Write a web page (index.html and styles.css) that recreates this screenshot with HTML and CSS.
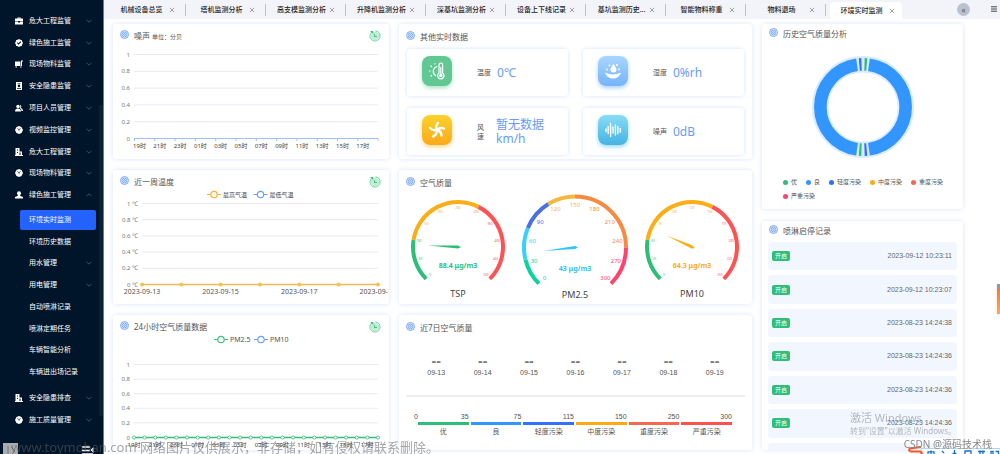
FILE: index.html
```html
<!DOCTYPE html>
<html lang="zh-CN">
<head>
<meta charset="utf-8">
<meta name="viewport" content="width=device-width, initial-scale=1">
<title>环境实时监测</title>
<link rel="stylesheet" href="styles.css">
</head>
<body>
<svg class="sprite" aria-hidden="true">
  <symbol id="i-case" viewBox="0 0 16 16"><path d="M5 3V1h6v2h5v5H0V3zm1.500-.5v.5h3v-.5zM0 9h6v2h4V9h6v6H0z"/></symbol>
  <symbol id="i-check" viewBox="0 0 16 16"><path fill-rule="evenodd" d="M8 0l2.500 1.500L13.500 2l.8 3L16 8l-1.700 3-.8 3-3 .5L8 16l-2.500-1.500-3-.5-.8-3L0 8l1.700-3 .8-3 3-.5zM4 8l3.300 3.500L12.500 6 11 4.600 7.200 8.500 5.500 6.600z"/></symbol>
  <symbol id="i-truck" viewBox="0 0 16 16"><path d="M0 3h11v9H0zM12 1h4v2h-2v9h-2zM1 13h3v2H1zm9 0h3v2h-3z"/></symbol>
  <symbol id="i-clip" viewBox="0 0 16 16"><path fill-rule="evenodd" d="M2 0h12v16H2zm3 3v1.500h6V3zm3 2.500a2.500 2.500 0 100 5 2.500 2.500 0 000-5zM4 12v1.500h8V12z"/></symbol>
  <symbol id="i-people" viewBox="0 0 16 16"><circle cx="6" cy="5" r="3.500"/><path d="M0 15c0-4 2-6 6-6s6 2 6 6zM10 1.500a3.500 3.500 0 011 6.500c3 .5 5 2.500 5 6h-3c0-3-1.500-5-3.500-6 1.500-2 1.500-4.500.5-6.500z"/></symbol>
  <symbol id="i-cube" viewBox="0 0 16 16"><path fill-rule="evenodd" d="M8 0l5 2 3 6-3 6-5 2-5-2-3-6 3-6zM4.500 5.500l3 1.900V10h1V7.400l3-1.900-.5-.8-3 1.800-3-1.800z"/></symbol>
  <symbol id="i-build" viewBox="0 0 16 16"><path fill-rule="evenodd" d="M1 0h8v7h5v7h2v2H0v-2h1zm3 3v2h2V3zm0 5v2h2V8zm5 1v5h2V9z"/></symbol>
  <symbol id="i-person" viewBox="0 0 16 16"><circle cx="8" cy="4.500" r="4"/><path d="M6 8h4l1 2 5 2v3H0v-3l5-2z"/></symbol>
  <symbol id="i-down" viewBox="0 0 10 10"><path d="M1 3l4 4 4-4" fill="none" stroke="currentColor"/></symbol>
  <symbol id="i-up" viewBox="0 0 10 10"><path d="M1 7l4-4 4 4" fill="none" stroke="currentColor"/></symbol>
  <symbol id="i-x" viewBox="0 0 10 10"><path d="M1.500 1.500l7 7m0-7l-7 7" fill="none" stroke="currentColor" stroke-width="1.300"/></symbol>
  <symbol id="i-target" viewBox="0 0 18 18"><g fill="none" stroke="#6a9cf5" stroke-width="1.600"><circle cx="9" cy="9" r="8" fill="#e4eefe"/><circle cx="9" cy="9" r="4.800"/><circle cx="9" cy="9" r="1.800"/></g></symbol>
  <symbol id="i-reload" viewBox="0 0 24 24"><circle cx="12" cy="12" r="8.500" fill="#c0eed5"/><path d="M6 4A10 10 0 1022 12 10 10 0 0013 2" fill="none" stroke="#5acb92" stroke-width="1.800"/><path d="M2 2h6.500v6z" fill="#43c181"/><path d="M11 8.500V13h5" fill="none" stroke="#4cc488" stroke-width="2.200"/></symbol>
</svg>

<div class="app">
  <aside class="side">
    <ul class="menu menu-main">
      <li><a href="#"><svg class="ico"><use href="#i-case"/></svg><span>危大工程监管</span><svg class="arr"><use href="#i-down"/></svg></a></li>
      <li><a href="#"><svg class="ico"><use href="#i-check"/></svg><span>绿色施工监管</span><svg class="arr"><use href="#i-down"/></svg></a></li>
      <li><a href="#"><svg class="ico"><use href="#i-truck"/></svg><span>现场物料监管</span><svg class="arr"><use href="#i-down"/></svg></a></li>
      <li><a href="#"><svg class="ico"><use href="#i-clip"/></svg><span>安全隐患监管</span><svg class="arr"><use href="#i-down"/></svg></a></li>
      <li><a href="#"><svg class="ico"><use href="#i-people"/></svg><span>项目人员管理</span><svg class="arr"><use href="#i-down"/></svg></a></li>
      <li><a href="#"><svg class="ico"><use href="#i-cube"/></svg><span>视频监控管理</span><svg class="arr"><use href="#i-down"/></svg></a></li>
      <li><a href="#"><svg class="ico"><use href="#i-build"/></svg><span>危大工程管理</span><svg class="arr"><use href="#i-down"/></svg></a></li>
      <li><a href="#"><svg class="ico"><use href="#i-cube"/></svg><span>现场物料管理</span><svg class="arr"><use href="#i-down"/></svg></a></li>
      <li><a href="#"><svg class="ico"><use href="#i-person"/></svg><span>绿色施工管理</span><svg class="arr"><use href="#i-up"/></svg></a></li>
    </ul>
    <ul class="menu menu-sub">
      <li><a href="#" class="active"><span>环境实时监测</span></a></li>
      <li><a href="#"><span>环境历史数据</span></a></li>
      <li><a href="#"><span>用水管理</span><svg class="arr"><use href="#i-down"/></svg></a></li>
      <li><a href="#"><span>用电管理</span><svg class="arr"><use href="#i-down"/></svg></a></li>
      <li><a href="#"><span>自动喷淋记录</span></a></li>
      <li><a href="#"><span>喷淋定期任务</span></a></li>
      <li><a href="#"><span>车辆智能分析</span></a></li>
      <li><a href="#"><span>车辆进出场记录</span></a></li>
    </ul>
    <ul class="menu menu-tail">
      <li><a href="#"><svg class="ico"><use href="#i-build"/></svg><span>安全隐患排查</span><svg class="arr"><use href="#i-down"/></svg></a></li>
      <li><a href="#"><svg class="ico"><use href="#i-cube"/></svg><span>施工质量管理</span><svg class="arr"><use href="#i-down"/></svg></a></li>
    </ul>
    <div class="side-foot">
      <button class="dock" aria-label="展开"><svg viewBox="0 0 15 15"><path d="M5 3v10M8 4l4 4-4 4" fill="none" stroke="#777"/></svg></button>
      <button class="fold" aria-label="收起菜单"><svg viewBox="0 0 12 9"><path d="M0 1h8M0 4.500h8M0 8h11" stroke="#fff" stroke-width="1.300"/><path d="M11.500 1v6L8.500 4z" fill="#fff"/></svg></button>
    </div>
    <i class="side-bar"></i>
  </aside>

  <div class="page">
    <nav class="tabs">
      <div class="tab"><a href="#">机械设备总览</a><button aria-label="关闭"><svg><use href="#i-x"/></svg></button></div>
      <div class="tab"><a href="#">塔机监测分析</a><button aria-label="关闭"><svg><use href="#i-x"/></svg></button></div>
      <div class="tab"><a href="#">高支模监测分析</a><button aria-label="关闭"><svg><use href="#i-x"/></svg></button></div>
      <div class="tab"><a href="#">升降机监测分析</a><button aria-label="关闭"><svg><use href="#i-x"/></svg></button></div>
      <div class="tab"><a href="#">深基坑监测分析</a><button aria-label="关闭"><svg><use href="#i-x"/></svg></button></div>
      <div class="tab"><a href="#">设备上下线记录</a><button aria-label="关闭"><svg><use href="#i-x"/></svg></button></div>
      <div class="tab"><a href="#">基坑监测历史...</a><button aria-label="关闭"><svg><use href="#i-x"/></svg></button></div>
      <div class="tab"><a href="#">智能物料称重</a><button aria-label="关闭"><svg><use href="#i-x"/></svg></button></div>
      <div class="tab"><a href="#">物料退场</a><button aria-label="关闭"><svg><use href="#i-x"/></svg></button></div>
      <div class="tab current"><a href="#">环境实时监测</a><button aria-label="关闭"><svg><use href="#i-x"/></svg></button></div>
      <button class="more" aria-label="更多标签">«</button>
      <button class="burger" aria-label="菜单"><svg viewBox="0 0 6 6"><path d="M0 .8h6M0 3h6M0 5.200h6" stroke="#444"/></svg></button>
    </nav>

    <main class="board">
      <div class="col">
        <section class="card">
          <header><svg class="target"><use href="#i-target"/></svg><h2>噪声 <small>单位：分贝</small></h2><button class="reload" aria-label="刷新"><svg><use href="#i-reload"/></svg></button></header>
          <svg class="chart" id="noise" viewBox="0 0 276 117"></svg>
        </section>
        <section class="card">
          <header><svg class="target"><use href="#i-target"/></svg><h2>近一周温度</h2><button class="reload" aria-label="刷新"><svg><use href="#i-reload"/></svg></button></header>
          <svg class="chart" id="temp" viewBox="0 0 276 116"></svg>
        </section>
        <section class="card">
          <header><svg class="target"><use href="#i-target"/></svg><h2>24小时空气质量数据</h2><button class="reload" aria-label="刷新"><svg><use href="#i-reload"/></svg></button></header>
          <svg class="chart" id="air24" viewBox="0 0 276 117"></svg>
        </section>
      </div>

      <div class="col mid">
        <section class="card">
          <header><svg class="target"><use href="#i-target"/></svg><h2>其他实时数据</h2></header>
          <div class="tiles">
            <div class="tile">
              <svg class="badge green" viewBox="0 0 30 30"><g fill="none" stroke="#fff" stroke-width="1.200" stroke-linecap="round"><path d="M15 10.500a5 5 0 00-1.500 9"/><path d="M8 15H7.500M9.500 10.500l-.6-.6M9.500 19.500l-.6.600M13 8V7.500"/><path d="M17 17V9a1.800 1.800 0 013.600 0v8a3.200 3.200 0 11-3.600 0z"/></g><path d="M18.200 11h1.200v7h-1.200z" fill="#fff"/><circle cx="18.800" cy="19.500" r="1.700" fill="#fff"/></svg>
              <span class="name">温度</span><b>0℃</b>
            </div>
            <div class="tile">
              <svg class="badge blue" viewBox="0 0 30 30"><g fill="#fff"><path d="M7 16.500q8 4 16 0-2 6-8 6t-8-6zM15.500 8q-3 4-3 5.500a3 3 0 006 0q0-1.500-3-5.500z"/><circle cx="11.500" cy="9.500" r="1"/><circle cx="19" cy="9" r="1"/><circle cx="9" cy="13.500" r=".9"/><circle cx="21" cy="13.500" r=".9"/></g></svg>
              <span class="name">湿度</span><b>0%rh</b>
            </div>
            <div class="tile">
              <svg class="badge yellow" viewBox="0 0 30 30"><g fill="none" stroke="#fff" stroke-width="2.400" stroke-linecap="round"><path d="M15 15q-2-4 1-7M15 15q3-3 7-1.500M15 15q4.500 1.500 4.500 5.500M15 15q0 4.500-4 6.500M15 15q-4 1-7-2"/></g></svg>
              <span class="name wrap">风速</span><b>暂无数据km/h</b>
            </div>
            <div class="tile">
              <svg class="badge cyan" viewBox="0 0 30 30"><path d="M8 14v2.500M10.200 11.500v7M12.600 8.500v13M15 12v6M17.400 10v10M19.800 11.500v7M22.200 13.500v3.500" stroke="#fff" stroke-width="1.400" stroke-linecap="round"/></svg>
              <span class="name">噪声</span><b>0dB</b>
            </div>
          </div>
        </section>
        <section class="card">
          <header><svg class="target"><use href="#i-target"/></svg><h2>空气质量</h2></header>
          <svg class="chart" id="gauges" viewBox="0 0 353 110"></svg>
        </section>
        <section class="card">
          <header><svg class="target"><use href="#i-target"/></svg><h2>近7日空气质量</h2></header>
          <ul class="days">
            <li><b>--</b>09-13</li><li><b>--</b>09-14</li><li><b>--</b>09-15</li><li><b>--</b>09-16</li><li><b>--</b>09-17</li><li><b>--</b>09-18</li><li><b>--</b>09-19</li>
          </ul>
          <ul class="scale">
            <li class="l1"><span><i>0</i><i>35</i></span>优</li>
            <li class="l2"><span><i>75</i></span>良</li>
            <li class="l3"><span><i>115</i></span>轻度污染</li>
            <li class="l4"><span><i>150</i></span>中度污染</li>
            <li class="l5"><span><i>250</i></span>重度污染</li>
            <li class="l6"><span><i>300</i></span>严重污染</li>
          </ul>
        </section>
      </div>

      <div class="col right">
        <section class="card history">
          <header><svg class="target"><use href="#i-target"/></svg><h2>历史空气质量分析</h2></header>
          <svg class="donut" id="donut" viewBox="0 0 104 104"></svg>
          <ul class="legend">
            <li class="l1">优</li><li class="l2">良</li><li class="l3">轻度污染</li><li class="l4">中度污染</li><li class="l5">重度污染</li><li class="l7">严重污染</li>
          </ul>
        </section>
        <section class="card log">
          <header><svg class="target"><use href="#i-target"/></svg><h2>喷淋启停记录</h2></header>
          <ul>
            <li><em>开启</em><time>2023-09-12 10:23:11</time></li>
            <li><em>开启</em><time>2023-09-12 10:23:07</time></li>
            <li><em>开启</em><time>2023-08-23 14:24:38</time></li>
            <li><em>开启</em><time>2023-08-23 14:24:36</time></li>
            <li><em>开启</em><time>2023-08-23 14:24:36</time></li>
            <li><em>开启</em><time>2023-08-23 14:24:36</time></li>
            <li></li>
          </ul>
        </section>
      </div>
    </main>
  </div>
</div>

<i class="edge-tab"></i>
<p class="mark site">www.toymoban.com 网络图片仅供展示，非存储，如有侵权请联系删除。</p>
<div class="mark activate"><p>激活 Windows</p><p>转到“设置”以激活 Windows。</p></div>
<svg class="ime" viewBox="0 0 93 8" aria-hidden="true">
  <path d="M14 9V2.500h80V9z" fill="#fff" stroke="#b5d0f0"/>
  <path d="M14 1L3 2.500Q1 5 4 5.500h9q3 1 1 3" fill="none" stroke="#f4592b" stroke-width="2.200"/>
  <g fill="none" stroke="#1470d0" stroke-width="1.300"><path d="M21 8V5.800h6V8M24 4.500V8M35 5l2 2M47.500 4V8M45.500 7.500h4M58 8V5h6v3M71 5.500h7M73 4.500V8M76 4.500V8M84 8V5.500h2v2.500M88.500 5.500h3v2.500"/></g>
</svg>
<p class="mark csdn">CSDN @源码技术栈</p>
<script src="script.js"></script>
</body>
</html>
```
FILE: styles.css
```css
* { box-sizing: border-box; }
body {
  margin: 0;
  background: #fff;
  color: #555;
  font: 7px/10px "Noto Sans", "Noto Sans CJK SC", sans-serif;
  overflow: hidden;
}
ul, h2, p { margin: 0; padding: 0; list-style: none; font-weight: 400; }
a { color: inherit; text-decoration: none; }
button { border: 0; padding: 0; background: none; color: inherit; font: inherit; display: flex; }
i, em { font-style: normal; }
svg { display: block; }
.sprite { position: absolute; width: 0; height: 0; }

.app { display: flex; height: 100vh; }

/* sidebar */
.side {
  position: relative;
  flex: 0 0 104px;
  display: flex;
  flex-direction: column;
  padding-top: 10px;
  background: #001529;
  border-right: 1px solid #6f7a86;
  color: #fff;
  overflow: hidden;
}
.menu { display: grid; grid-auto-rows: 1fr; flex: none; }
.menu-main { height: 196px; }
.menu-sub { height: 174px; margin: 3px 0 4px; }
.menu-tail { height: 44px; }
.menu li { display: flex; align-items: center; padding: 0 7px 0 15px; }
.menu a { flex: 1; display: flex; align-items: center; height: 20px; }
.menu span { flex: 1; }
.menu .ico { width: 8px; height: 8px; margin-right: 6px; fill: #fff; }
.menu .arr { width: 6px; height: 6px; margin-right: 4px; color: #6d7884; }
.menu-sub li { padding-left: 20px; }
.menu-sub a { padding-left: 9px; border-radius: 2px; }
.menu-sub .active { background: #2362fb; }
.side-foot { display: flex; justify-content: space-between; align-items: flex-start; margin-top: 12px; padding: 0 9px 0 3px; }
.dock { background: #a9adb1; }
.dock svg { width: 15px; height: 15px; }
.fold { margin-top: 3px; }
.fold svg { width: 12px; height: 9px; }
.side-bar { position: absolute; right: 0; top: 105px; width: 4px; height: 311px; background: #0d2135; }

/* tab strip */
.page { flex: 1; min-width: 0; display: flex; flex-direction: column; }
.tabs { display: flex; align-items: center; height: 19px; padding-left: 2px; background: #f3f4f9; color: #222; }
.tab { flex: 0 1 80px; display: flex; align-items: center; height: 12px; padding: 0 10px 0 8px; border-right: 1px solid #bfc2c8; }
.tab a { flex: 1; text-align: center; font-weight: 500; white-space: nowrap; }
.tab button { color: #888; }
.tab svg { width: 6px; height: 6px; }
.tab.current { flex-basis: 72px; height: 17px; margin: 2px 0 0 4px; padding: 0 7px 0 4px; background: #fff; border: 0; border-radius: 4px 4px 0 0; }
.more { width: 13px; height: 13px; margin-left: auto; justify-content: center; align-items: center; border-radius: 50%; background: #b9c2d1; color: #555; font-size: 8px; }
.burger { margin: 0 3px 2px 21px; }
.burger svg { width: 6px; height: 6px; }

/* cards */
.board { flex: 1; min-height: 0; display: grid; grid-template-columns: 276fr 353fr 201fr; gap: 10px; padding: 5px 37px 4px 9px; }
.col { display: flex; flex-direction: column; gap: 11px; min-width: 0; min-height: 0; }
.card { background: #fff; border-radius: 3px; box-shadow: 0 0 5px #d6e3fb; overflow: hidden; }
.card header { display: flex; align-items: flex-start; padding: 6px 8px 0 7px; height: 18px; }
.card h2 { flex: 1; font-size: 8px; line-height: 12px; color: #555; }
.card small { font-size: 6px; }
.target { width: 9px; height: 9px; margin-right: 5px; }
.reload svg { width: 12px; height: 12px; }
.chart { width: 100%; height: auto; font-size: 6px; fill: #777; }
.chart text { dominant-baseline: central; text-anchor: middle; }
.chart .end { text-anchor: end; }
.chart .start { text-anchor: start; }
.chart .date { font-size: 7px; fill: #555; }
.chart .hour { fill: #444; }
.chart .micro { font-size: 3px; }
.chart .value { font-size: 7px; font-weight: 700; }
.chart .label { font-size: 9px; fill: #444; }

.mid .card header { padding-top: 7px; height: 25px; }
.mid .card:nth-child(2) header { height: 24px; }
.mid .card:nth-child(3) { height: 135px; }
#gauges { overflow: visible; }

.tiles { display: grid; grid-template-columns: 1fr 1fr; gap: 12px 15px; padding: 0 8px 4px; }
.tile { display: flex; align-items: center; height: 47px; padding: 0 15px; border-radius: 3px; box-shadow: 0 0 4px #d3e2fb; }
.badge { flex: none; width: 30px; height: 30px; margin: 0 25px 4px 0; border-radius: 8px; }
.green { background: #62c893; box-shadow: 0 2px 4px #a9e4c6; }
.blue { background: linear-gradient(#a9d6ff, #76b3fa); box-shadow: 0 2px 4px #a9d0fc; }
.yellow { background: linear-gradient(#fbd22c, #fba919); box-shadow: 0 2px 4px #fcd88c; }
.cyan { background: linear-gradient(#88dcf4, #45b3e3); box-shadow: 0 2px 4px #9bd9f2; }
.tile .name { margin-right: 6px; }
.tile .wrap { width: 7px; margin-right: 12px; line-height: 9px; }
.tile b { max-width: 50px; font-size: 12px; line-height: 14px; font-weight: 400; color: #6a9bf8; }

.days { display: grid; grid-template-columns: repeat(7, 1fr); margin: 0 7px; padding: 15px 7px 17px; border-bottom: 2px solid #eee; text-align: center; font-family: "Liberation Sans", sans-serif; line-height: 10px; }
.days b { display: block; font-size: 14px; line-height: 13px; color: #777; }
.scale { display: grid; grid-template-columns: repeat(6, 1fr); gap: 2px; padding: 15px 20px 0 19px; text-align: center; }
.scale span { display: flex; justify-content: flex-end; margin-bottom: 2px; border-bottom: 3px solid var(--c); font-family: "Liberation Sans", sans-serif; }
.scale i:first-child:nth-last-child(2) { margin-left: -4px; margin-right: auto; }
.l1 { --c: #2dbe78; }
.l2 { --c: #3396ff; }
.l3 { --c: #3370ff; }
.l4 { --c: #fbab18; }
.l5 { --c: #f8674f; }
.l6 { --c: #ff5050; }
.l7 { --c: #ff4571; }

.right { gap: 12px; }
.right .card header { padding-top: 4px; height: 21px; }
.history { flex: none; padding-bottom: 8px; }
.donut { width: 104px; margin: 10px auto 18px; }
.legend { display: flex; flex-wrap: wrap; gap: 4px 9px; padding: 0 8px 0 21px; font-size: 6px; }
.legend li { display: flex; align-items: center; }
.legend li::before { content: ""; width: 5px; height: 5px; margin-right: 3px; border-radius: 50%; background: var(--c); }
.log { flex: 1; min-height: 0; }
.log ul { display: grid; grid-auto-rows: 1fr; gap: 5px; height: 229px; padding: 0 6px; }
.log li { display: flex; align-items: center; justify-content: space-between; padding: 0 5px 0 4px; border-radius: 3px; background: #f2f7ff; }
.log em { padding: 0 3px; border-radius: 2px; background: #2dbe78; color: #fff; font-size: 6px; }
.log time { font-family: "Liberation Sans", sans-serif; color: #666; }

/* overlays */
.edge-tab { position: fixed; right: 0; top: 284px; width: 3px; height: 30px; background: linear-gradient(#999 5px, #fa7a26 5px, #ffa659); box-shadow: 0 1px 3px #ddd; }
.mark { position: fixed; pointer-events: none; white-space: nowrap; color: rgba(120, 120, 120, .5); }
.site { left: 11px; bottom: -3px; font-size: 13px; line-height: 20px; color: rgba(95, 95, 95, .55); }
.activate { right: 44px; bottom: 17px; font-size: 8px; line-height: 12px; }
.activate p:first-child { font-size: 11px; line-height: 14px; }
.csdn { right: 8px; bottom: 3px; font-size: 10px; line-height: 14px; color: #8a8a8a; }
.ime { position: fixed; right: 0; bottom: 0; width: 93px; height: 8px; }
```
FILE: script.js
```javascript
const f = n => n.toFixed(2);
const text = (x, y, s, cls = '', fill = '') =>
  `<text x="${f(x)}" y="${f(y)}" class="${cls}"${fill ? ` style="fill:${fill}"` : ''}>${s}</text>`;
const line = (x1, y1, x2, y2, c, w = 1) =>
  `<path d="M${f(x1)} ${f(y1)}L${f(x2)} ${f(y2)}" stroke="${c}" stroke-width="${w}"/>`;
const put = (id, s) => { document.getElementById(id).innerHTML = s; };

function grid(left, right, top, bottom, unit = '') {
  let s = '';
  ['1', '0.8', '0.6', '0.4', '0.2', '0'].forEach((v, i) => {
    const y = top + (bottom - top) * i / 5;
    s += line(left, y, right, y, '#e9ebf3') + text(left - 4, y, v + unit, 'end');
  });
  return s;
}
function legend(x, y, c, label, cls) {
  return line(x - 7, y, x + 7, y, c, 1.2) +
    `<circle cx="${x}" cy="${y}" r="3.2" fill="#fff" stroke="${c}" stroke-width="1.2"/>` +
    text(x + 9, y, label, 'start ' + cls);
}
function dots(left, right, y, n, c, fill, r) {
  let s = line(left, y, right, y, c, 1.4);
  for (let i = 0; i < n; i++)
    s += `<circle cx="${f(left + (right - left) * i / (n - 1))}" cy="${y}" r="${r}" fill="${fill}" stroke="${c}" stroke-width=".8"/>`;
  return s;
}
const hours = ['19', '21', '23', '01', '03', '05', '07', '09', '11', '13', '15', '17'];

/* noise */
let s = grid(21, 265, 12.5, 96.5) + line(21, 96.5, 265, 96.5, '#9fc0fb');
for (let i = 0; i <= 12; i++) s += line(21.5 + i * 20.3, 96.5, 21.5 + i * 20.3, 99, '#9fc0fb');
hours.forEach((h, i) => { s += text(26.5 + i * 20.3, 103.5, h + '时', 'hour'); });
put('noise', s);

/* weekly temperature */
s = legend(101, 6.5, '#fbb02d', '最高气温', 'hour') + legend(147.5, 6.5, '#6b9ff8', '最低气温', 'hour') +
  grid(29, 265, 15.5, 96.5, ' ℃') + dots(29, 265, 96.5, 7, '#eebb55', '#fbc02d', 1.6);
['2023-09-13', '2023-09-15', '2023-09-17', '2023-09-19'].forEach((d, i) => { s += text(29 + i * 78.6, 103.5, d, 'date'); });
put('temp', s);

/* 24h air quality */
s = legend(108, 6.5, '#3fc383', 'PM2.5', 'date') + legend(148, 6.5, '#6b9ff8', 'PM10', 'date') +
  grid(21, 265, 31.5, 104.5) + dots(21, 265, 104.5, 24, '#33bd7b', '#fff', 1.6);
hours.forEach((h, i) => { s += text(21 + i * 21.2, 111.5, h + '时', 'hour'); });
put('air24', s);

/* gauges */
function polar(cx, cy, r, deg) {
  const a = deg * Math.PI / 180;
  return [cx + r * Math.cos(a), cy - r * Math.sin(a)];
}
function gauge(g) {
  const at = v => 225 - 270 * v / g.max;
  let out = '', from = 0;
  g.bands.forEach(([to, c]) => {
    const [x1, y1] = polar(g.x, g.y, g.r - 2, at(from)), [x2, y2] = polar(g.x, g.y, g.r - 2, at(to));
    out += `<path d="M${f(x1)} ${f(y1)}A${g.r - 2} ${g.r - 2} 0 0 1 ${f(x2)} ${f(y2)}" fill="none" stroke="${c}" stroke-width="4"/>`;
    from = to;
  });
  for (let i = 0; i <= 10; i++) {
    const v = g.max * i / 10, [x, y] = polar(g.x, g.y, g.lr, at(v));
    out += text(x, y, v, g.cls, g.bands.find(b => v <= b[0])[1]);
  }
  const d = at(g.value), tip = polar(g.x, g.y, g.len, d), tail = polar(g.x, g.y, -3, d);
  const a = polar(g.x, g.y, 1.6, d + 90), b = polar(g.x, g.y, 1.6, d - 90);
  out += `<path d="M${[tip, a, tail, b].map(p => p.map(f).join(' ')).join('L')}Z" fill="${g.color}"/>`;
  out += text(g.x, g.ty, g.value + ' μg/m3', 'value', g.color) + text(g.x, g.ly, g.name, 'label');
  return out;
}
put('gauges',
  gauge({ x: 59, y: 53, r: 47, lr: 39.5, len: 30, max: 500, value: 88.4, name: 'TSP', ty: 71.5, ly: 99.5, cls: 'micro', bands: [[100, '#2dbe78'], [300, '#fbae17'], [500, '#ff5252']], color: '#2dbe78' }) +
  gauge({ x: 176, y: 53.5, r: 53, lr: 43, len: 32, max: 300, value: 43, name: 'PM2.5', ty: 74.5, ly: 100.5, cls: '', bands: [[35, '#0cd3a0'], [75, '#38d0fd'], [115, '#4b70e6'], [150, '#f4b83f'], [250, '#f78a40'], [300, '#fd446f']], color: '#33c5f5' }) +
  gauge({ x: 293, y: 53, r: 47, lr: 39.5, len: 28, max: 250, value: 64.3, name: 'PM10', ty: 71.5, ly: 99.5, cls: 'micro', bands: [[50, '#2dbe78'], [150, '#fbae17'], [250, '#ff5252']], color: '#fbae17' }));

/* donut */
s = '<circle cx="52" cy="52" r="42.8" fill="none" stroke="#d9ebfc" stroke-width="16.4"/>';
[[2, 5, '#2dbe78'], [8, 172, '#3396ff'], [175, 178, '#3370ff'], [182, 185, '#2dbe78'], [188, 352, '#3396ff'], [355, 358, '#3370ff']]
  .forEach(([a, b, c]) => {
    const [x1, y1] = polar(52, 52, 42.7, 90 - a), [x2, y2] = polar(52, 52, 42.7, 90 - b);
    s += `<path d="M${f(x1)} ${f(y1)}A42.7 42.7 0 0 1 ${f(x2)} ${f(y2)}" fill="none" stroke="${c}" stroke-width="12.6"/>`;
  });
put('donut', s);
```
